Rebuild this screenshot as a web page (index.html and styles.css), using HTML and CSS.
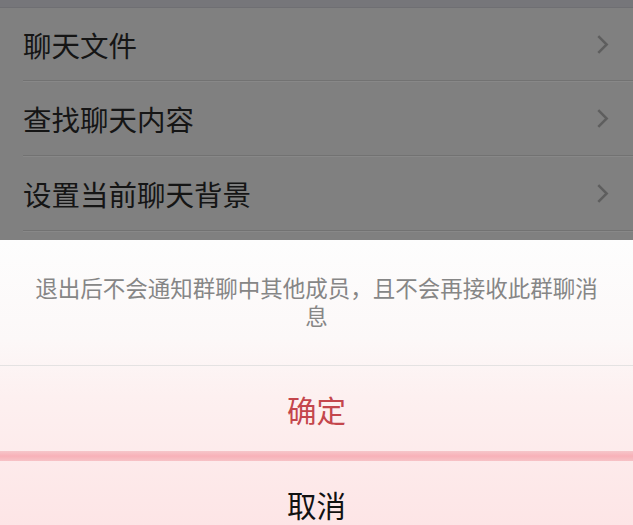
FILE: index.html
```html
<!DOCTYPE html>
<html lang="zh-CN">
<head>
  <meta charset="UTF-8" />
  <meta name="viewport" content="width=device-width, initial-scale=1.0"/>
  <title>聊天信息</title>
  <link rel="stylesheet" href="styles.css">
</head>
<body>
  <div class="page">
    <div class="gap"></div>
    <ul class="menu">
      <li class="menu-item"><span>聊天文件</span><svg class="chevron" viewBox="0 0 12 20"><path d="M2 2 L10 10 L2 18" /></svg></li>
      <li class="menu-item"><span>查找聊天内容</span><svg class="chevron" viewBox="0 0 12 20"><path d="M2 2 L10 10 L2 18" /></svg></li>
      <li class="menu-item"><span>设置当前聊天背景</span><svg class="chevron" viewBox="0 0 12 20"><path d="M2 2 L10 10 L2 18" /></svg></li>
      <li class="menu-item"></li>
    </ul>
  </div>

  <div class="sheet">
    <div class="sheet-message">退出后不会通知群聊中其他成员，且不会再接收此群聊消息</div>
    <div class="sheet-action danger">确定</div>
    <div class="sheet-divider"></div>
    <div class="sheet-action">取消</div>
  </div>
</body>
</html>
```

FILE: styles.css
```css
* {
  margin: 0;
  padding: 0;
  box-sizing: border-box;
  font-family: "Noto Sans CJK SC", "Noto Sans", sans-serif;
}

body {
  width: 633px;
  height: 525px;
  overflow: hidden;
  background-color: #808080;
  position: relative;
}

.gap {
  height: 8px;
  background-color: #76767a;
  border-bottom: 1px solid #6f6f73;
}

.menu {
  list-style: none;
  background-color: #808080;
}

.menu-item {
  height: 75px;
  margin-left: 23px;
  padding-right: 24px;
  display: flex;
  align-items: center;
  justify-content: space-between;
  border-bottom: 1px solid #727272;
  box-shadow: 0 1px 0 #888;
  font-size: 28.5px;
  color: #151515;
}

.menu-item:first-child {
  height: 73px;
}

.chevron {
  width: 13px;
  height: 21px;
  fill: none;
  stroke: #5e5e5e;
  stroke-width: 2.4;
}

.sheet {
  position: absolute;
  top: 240px;
  left: 0;
  right: 0;
  bottom: 0;
  background: linear-gradient(to bottom, #fdfdfd 0%, #fcf8f8 35%, #fdf0f0 55%, #fde5e6 100%);
}

.sheet-message {
  height: 126px;
  padding: 33px 30px 0;
  text-align: center;
  font-size: 22.5px;
  line-height: 28px;
  color: #868686;
  border-bottom: 1px solid #e4e2e2;
}

.sheet-action {
  height: 85px;
  display: flex;
  align-items: center;
  justify-content: center;
  font-size: 29.5px;
  color: #111;
}

.sheet-action.danger {
  color: #c4464c;
}

.sheet-divider {
  height: 10px;
  background: linear-gradient(to bottom, #f6c6ca, #f8b1b8 50%, #f6c2c6);
}
```
